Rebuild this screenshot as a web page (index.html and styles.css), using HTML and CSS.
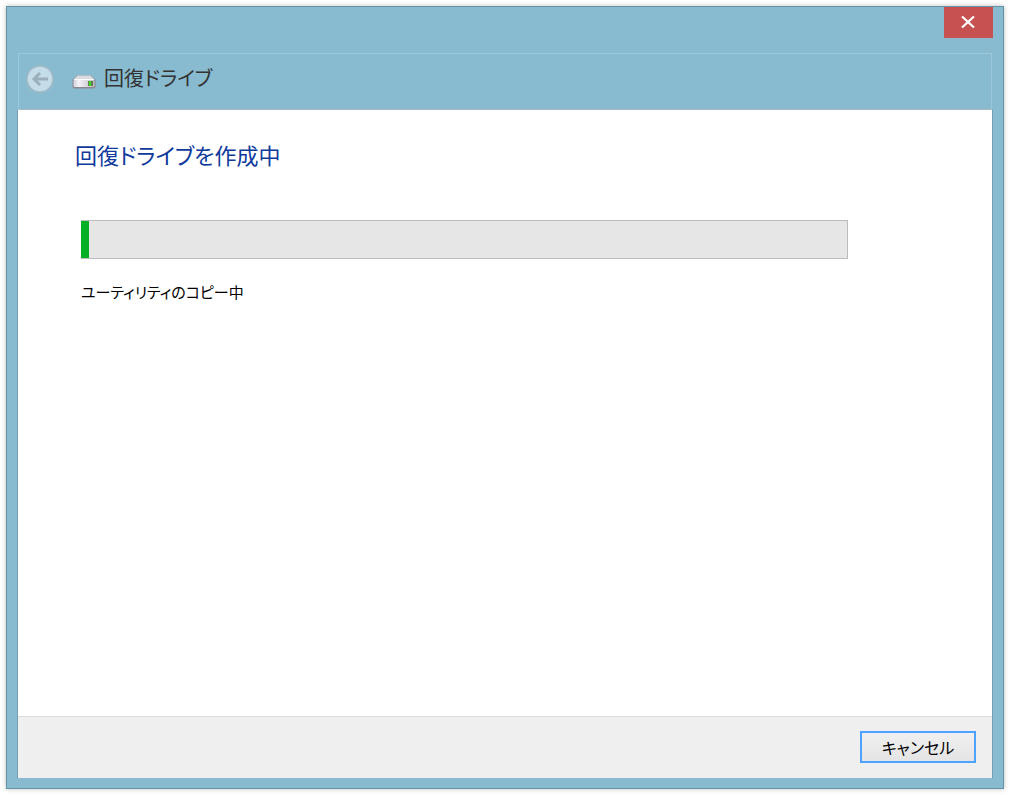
FILE: index.html
```
<!DOCTYPE html>
<html lang="ja">

<head>
    <meta charset="UTF-8">
    <meta name="viewport" content="width=device-width, initial-scale=1.0">
    <title>回復ドライブ</title>
    <link rel="stylesheet" href="styles.css">
</head>

<body>
    <div class="window">
        <div class="titlebar">
            <button type="button" class="close-button" aria-label="閉じる">
                <svg width="15" height="12" viewBox="0 0 15 12" aria-hidden="true">
                    <path d="M1 0.5L13 11.5M13 0.5L1 11.5" stroke="#fff" stroke-width="2.2" fill="none"/>
                </svg>
            </button>
        </div>

        <header class="header">
            <button type="button" class="back-button" aria-label="戻る" disabled>
                <svg width="28" height="28" viewBox="0 0 28 28" aria-hidden="true">
                    <circle cx="14" cy="14" r="13" fill="#c4dde8" stroke="#a3bac5" stroke-width="1.6"/>
                    <path d="M22 14H8.5M14 8L8 14L14 20" fill="none" stroke="#9bb0ba" stroke-width="3"/>
                </svg>
            </button>
            <svg class="drive-icon" width="24" height="14" viewBox="0 0 24 14" aria-hidden="true">
                <defs>
                    <linearGradient id="front" x1="0" y1="0" x2="1" y2="0">
                        <stop offset="0" stop-color="#d3d0dc"/>
                        <stop offset="0.25" stop-color="#f4f3f7"/>
                        <stop offset="1" stop-color="#bdbac4"/>
                    </linearGradient>
                </defs>
                <path d="M5 0.5H19L23.5 5V11.5Q23.5 13.5 21.5 13.5H2.5Q0.5 13.5 0.5 11.5V5Z" fill="#8d8590"/>
                <path d="M5.5 0.5H18.5L22.5 4.5H1.5Z" fill="#d9dcde"/>
                <rect x="1.5" y="5" width="21" height="7" rx="1" fill="url(#front)"/>
                <path d="M2 4.5H22" stroke="#fff"/>
                <rect x="16" y="6" width="5" height="5" fill="#5b7d55"/>
                <rect x="17" y="6" width="2" height="5" fill="#45d619"/>
            </svg>
            <h1 class="title">回復ドライブ</h1>
        </header>

        <main class="content">
            <h2 class="heading">回復ドライブを作成中</h2>
            <progress class="progress" id="copyProgress" value="1" max="100"></progress>
            <label class="status" for="copyProgress">ユーティリティのコピー中</label>
        </main>

        <footer class="footer">
            <button type="button" class="cancel-button">キャンセル</button>
        </footer>
    </div>
</body>

</html>
```
FILE: styles.css
```
* {
    box-sizing: border-box;
}

body {
    margin: 0;
    padding: 6px;
    background: #fff;
    color: #000;
    font-family: "Noto Sans CJK JP", sans-serif;
    font-feature-settings: "palt";
}

button {
    font: inherit;
    font-feature-settings: inherit;
}

.window {
    display: flex;
    flex-direction: column;
    min-height: calc(100vh - 12px);
    padding: 0 10px 10px;
    background: #89bbd0;
    border: 1px solid #6592a5;
    box-shadow: 0 0 5px rgba(0, 0, 0, 0.25);
}

.titlebar {
    display: flex;
    justify-content: flex-end;
    height: 46px;
}

.close-button {
    display: flex;
    align-items: center;
    justify-content: center;
    width: 49px;
    height: 31px;
    padding: 0 0 2px;
    border: none;
    background: #c75050;
}

.header {
    display: flex;
    align-items: center;
    height: 57px;
    margin: 0 1px;
    padding: 0 7px;
    border: 1px solid #9dc8da;
    border-bottom-color: #a5bcc7;
}

.back-button {
    display: flex;
    margin: 0 18px 6px 0;
    padding: 0;
    border: none;
    background: none;
}

.drive-icon {
    margin-right: 8px;
}

.title {
    margin: 0 0 8px;
    color: #333;
    font-size: 20px;
    font-weight: 400;
    line-height: 32px;
}

.content {
    flex: 1;
    padding: 28px 144px 28px 57px;
    background: #fff;
    border: solid #749fb1;
    border-width: 0 1px;
}

.heading {
    margin: 0 0 50px;
    color: #0f3a9c;
    font-size: 22px;
    font-weight: 400;
    line-height: 32px;
}

.progress {
    display: block;
    width: calc(100% - 6px);
    height: 39px;
    margin: 0 0 20px 6px;
    appearance: none;
    background: #e6e6e6;
    border: 1px solid #bcbcbc;
    border-left: none;
}

.progress::-webkit-progress-bar {
    background: #e6e6e6;
}

.progress::-webkit-progress-value {
    background: #06b025;
}

.status {
    display: block;
    margin-left: 6px;
    font-size: 15px;
    line-height: 26px;
}

.footer {
    display: flex;
    align-items: center;
    justify-content: flex-end;
    height: 62px;
    padding: 0 16px;
    background: #efefef;
    border: solid #749fb1;
    border-width: 0 1px;
    box-shadow: inset 0 1px #dcdcdc;
}

.cancel-button {
    width: 116px;
    height: 32px;
    padding: 0;
    color: #000;
    background: linear-gradient(#f0f0f0, #e4e4e4);
    border: 2px solid #4da3ff;
    font-size: 16px;
    line-height: 26px;
}
```
